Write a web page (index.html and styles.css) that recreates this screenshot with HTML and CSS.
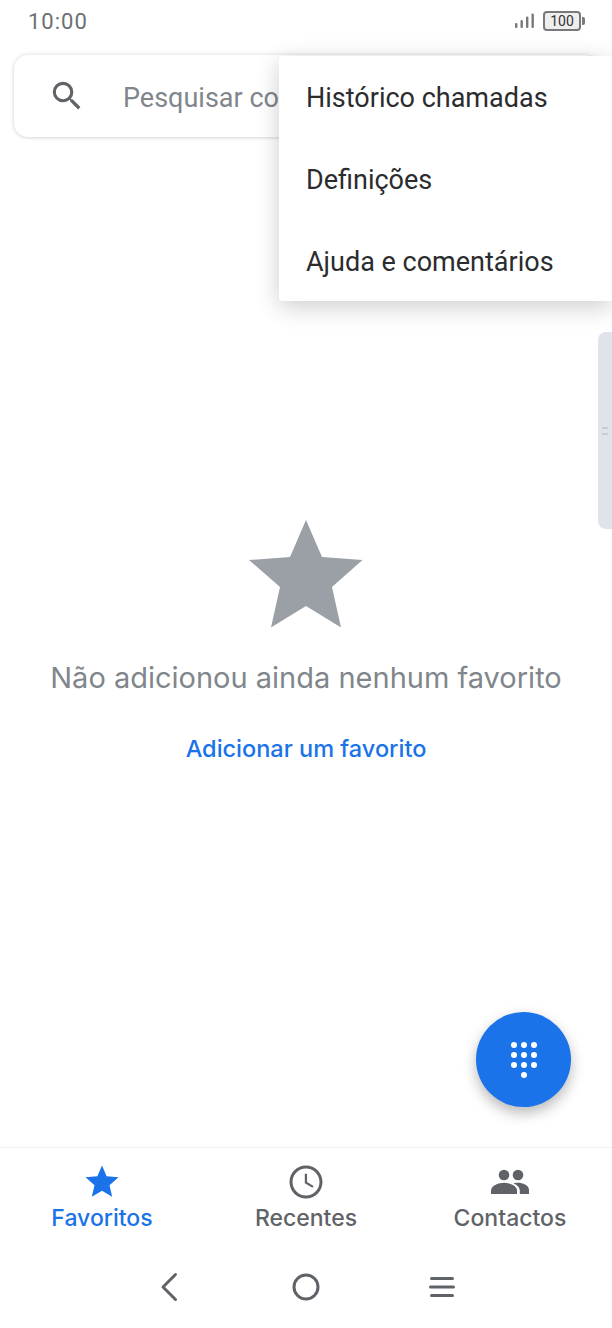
FILE: index.html
```html
<!DOCTYPE html>
<html lang="pt">
<head>
<meta charset="utf-8">
<title>Telefone</title>
<link rel="stylesheet" href="styles.css">
</head>
<body>
<div class="phone">
  <header class="status">
    <span class="time">10:00</span>
    <div class="status-icons">
      <svg class="signal" width="20" height="16" viewBox="0 0 20 16"><g fill="#77797b"><rect x="0" y="10" width="2.4" height="5" rx="1"/><rect x="5.5" y="7" width="2.4" height="8" rx="1"/><rect x="11" y="3.5" width="2.4" height="11.500" rx="1"/><rect x="16.500" y="0.500" width="2.400" height="14.500" rx="1"/></g></svg>
      <div class="battery"><div class="battery-body">100</div><div class="battery-tip"></div></div>
    </div>
  </header>
  <div class="search">
    <svg class="search-icon" width="38" height="38" viewBox="0 0 24 24"><path fill="#5f6368" d="M15.5 14h-.79l-.28-.27A6.47 6.47 0 0 0 16 9.500 6.500 6.500 0 1 0 9.500 16c1.610 0 3.090-.59 4.230-1.570l.27.28v.79l5 4.990L20.490 19l-4.990-5zm-6 0C7.010 14 5 11.990 5 9.500S7.010 5 9.500 5 14 7.010 14 9.500 11.990 14 9.500 14z"/></svg>
    <span class="search-text">Pesquisar co</span>
  </div>
  <main class="empty">
    <svg class="big-star" width="114" height="108" viewBox="249 520 114 108"><polygon fill="#9aa0a6" points="306,520 322,557 362.500,560 332,587 341,627.500 306,606 271,627.500 280,587 249,560 290,557"/></svg>
    <p class="empty-text">Não adicionou ainda nenhum favorito</p>
    <a class="empty-link">Adicionar um favorito</a>
  </main>
  <nav class="tabs">
    <div class="tab tab-active">
      <svg width="36" height="36" viewBox="0 0 36 36"><polygon fill="#1a73e8" points="18,1.500 22.600,12.300 34.500,13.300 25.500,21.200 28.200,32.800 18,26.700 7.800,32.800 10.500,21.200 1.500,13.300 13.400,12.300"/></svg>
      <span class="tab-label">Favoritos</span>
    </div>
    <div class="tab">
      <svg width="36" height="36" viewBox="0 0 24 24"><path fill="#5f6368" d="M11.990 1C5.920 1 1 5.930 1 12s4.920 11 10.990 11C18.070 23 23 18.070 23 12S18.070 1 11.990 1zM12 21c-4.970 0-9-4.030-9-9s4.030-9 9-9 9 4.030 9 9-4.030 9-9 9z"/><path fill="#5f6368" d="M12.700 6.500h-1.500v6.300l5.100 3.100.8-1.250-4.400-2.650z"/></svg>
      <span class="tab-label">Recentes</span>
    </div>
    <div class="tab">
      <svg width="40" height="36" viewBox="0 0 40 36"><g fill="#5f6368"><circle cx="14" cy="11" r="5.300"/><circle cx="28" cy="11" r="5.300"/><path d="M1 30v-3.500C1 21.500 9 18.800 14 18.800s13 2.700 13 7.700V30z"/><path d="M23.500 19.200c.9-.2 2.700-.4 4.500-.4 4.500 0 11 2.300 11 7.200V30H29.800v-3.500c0-3-2.300-5.600-6.300-7.300z"/></g></svg>
      <span class="tab-label">Contactos</span>
    </div>
  </nav>
  <footer class="sysnav">
    <svg width="24" height="30" viewBox="0 0 24 30"><path d="M18.500 2.500 6 15l12.500 12.500" fill="none" stroke="#5f6368" stroke-width="3" stroke-linecap="round" stroke-linejoin="round"/></svg>
    <svg width="28" height="28" viewBox="0 0 28 28"><circle cx="14" cy="14" r="12" fill="none" stroke="#5f6368" stroke-width="3"/></svg>
    <svg width="28" height="24" viewBox="1 0 28 24"><g fill="#5f6368"><rect x="2" y="2" width="24" height="3" rx="1.500"/><rect x="1" y="10.500" width="26" height="3" rx="1.500"/><rect x="2" y="19" width="24" height="3" rx="1.500"/></g></svg>
  </footer>

  <div class="menu">
    <div class="menu-item">Histórico chamadas</div>
    <div class="menu-item">Definições</div>
    <div class="menu-item">Ajuda e comentários</div>
  </div>
  <div class="handle"><span class="grip"></span></div>
  <button class="fab" aria-label="Teclado">
    <svg width="32" height="40" viewBox="0 0 32 40"><g fill="#fff"><circle cx="6" cy="5" r="3"/><circle cx="16" cy="5" r="3"/><circle cx="26" cy="5" r="3"/><circle cx="6" cy="15" r="3"/><circle cx="16" cy="15" r="3"/><circle cx="26" cy="15" r="3"/><circle cx="6" cy="25" r="3"/><circle cx="16" cy="25" r="3"/><circle cx="26" cy="25" r="3"/><circle cx="16" cy="35" r="3"/></g></svg>
  </button>
</div>
</body>
</html>
```
FILE: styles.css
```css
* { box-sizing: border-box; }
html, body { margin: 0; padding: 0; background: #fff; }
.phone {
  position: relative;
  width: 612px;
  height: 1328px;
  overflow: hidden;
  display: flex;
  flex-direction: column;
  background: #fff;
  font-family: Roboto, sans-serif;
}
.status {
  height: 44px;
  flex: none;
  display: flex;
  align-items: center;
  justify-content: space-between;
  padding: 0 27px 2px 28px;
}
.time { font-size: 22px; color: #6b6f73; letter-spacing: 1px; }
.status-icons { display: flex; align-items: center; gap: 8px; }
.battery { display: flex; align-items: center; }
.battery-body {
  width: 38px;
  height: 20px;
  border: 2px solid #77797b;
  border-radius: 4px;
  background: #eee;
  font-size: 14px;
  line-height: 16px;
  text-align: center;
  color: #333;
}
.battery-tip { width: 3px; height: 8px; background: #77797b; border-radius: 0 2px 2px 0; margin-left: 1px; }
.search {
  flex: none;
  height: 82px;
  margin: 11px 14px 0 14px;
  border-radius: 14px;
  background: #fff;
  box-shadow: 0 0 5px rgba(0,0,0,.14), 0 1px 3px rgba(0,0,0,.07);
  display: flex;
  align-items: center;
  padding-left: 34px;
  gap: 37px;
  white-space: nowrap;
}
.search-icon { flex: none; }
.search-text { font-size: 27px; color: #80868b; padding-top: 3px; }
.empty {
  flex: 1;
  display: flex;
  flex-direction: column;
  align-items: center;
  padding-top: 383px;
}
.big-star { display: block; }
.empty-text { margin: 30px 0 0; font-family: Inter, Roboto, sans-serif; font-size: 29px; line-height: 40px; color: #80868b; white-space: nowrap; }
.empty-link { margin-top: 36px; font-family: Inter, Roboto, sans-serif; font-size: 23.500px; line-height: 30px; font-weight: 500; color: #1a73e8; }
.tabs {
  flex: none;
  height: 100px;
  border-top: 1px solid #f1f1f1;
  display: grid;
  grid-template-columns: repeat(3, 1fr);
  padding-top: 16px;
}
.tab { display: flex; flex-direction: column; align-items: center; color: #5f6368; }
.tab-active { color: #1a73e8; }
.tab-label { font-family: Inter, Roboto, sans-serif; font-size: 23px; line-height: 32px; font-weight: 500; margin-top: 2px; }
.tabs .tab svg { display: block; }
.sysnav {
  flex: none;
  height: 81px;
  display: grid;
  grid-template-columns: repeat(3, 137px);
  justify-content: center;
  justify-items: center;
  align-items: center;
  padding-bottom: 1px;
}
.menu {
  position: absolute;
  top: 56px;
  left: 279px;
  right: 0;
  height: 245px;
  background: #fff;
  border-radius: 4px 0 0 4px;
  box-shadow: 0 6px 24px rgba(0,0,0,.2);
}
.menu-item {
  height: 82px;
  display: flex;
  align-items: center;
  padding: 2px 0 0 27px;
  font-size: 27px;
  color: #2b2c2e;
  white-space: nowrap;
}
.handle {
  position: absolute;
  top: 332px;
  right: 0;
  width: 14px;
  height: 197px;
  background: #dfe3ea;
  border-radius: 8px 0 0 8px;
  display: flex;
  align-items: center;
  justify-content: center;
}
.grip {
  display: block;
  width: 6px;
  height: 8px;
  border-top: 2px solid #c6cad2;
  border-bottom: 2px solid #c6cad2;
}
.fab {
  position: absolute;
  left: 476px;
  top: 1012px;
  width: 95px;
  height: 95px;
  padding: 0;
  border: 0;
  border-radius: 50%;
  background: #1a73e8;
  box-shadow: 0 6px 14px rgba(0,0,0,.28);
  display: flex;
  align-items: center;
  justify-content: center;
}
```
